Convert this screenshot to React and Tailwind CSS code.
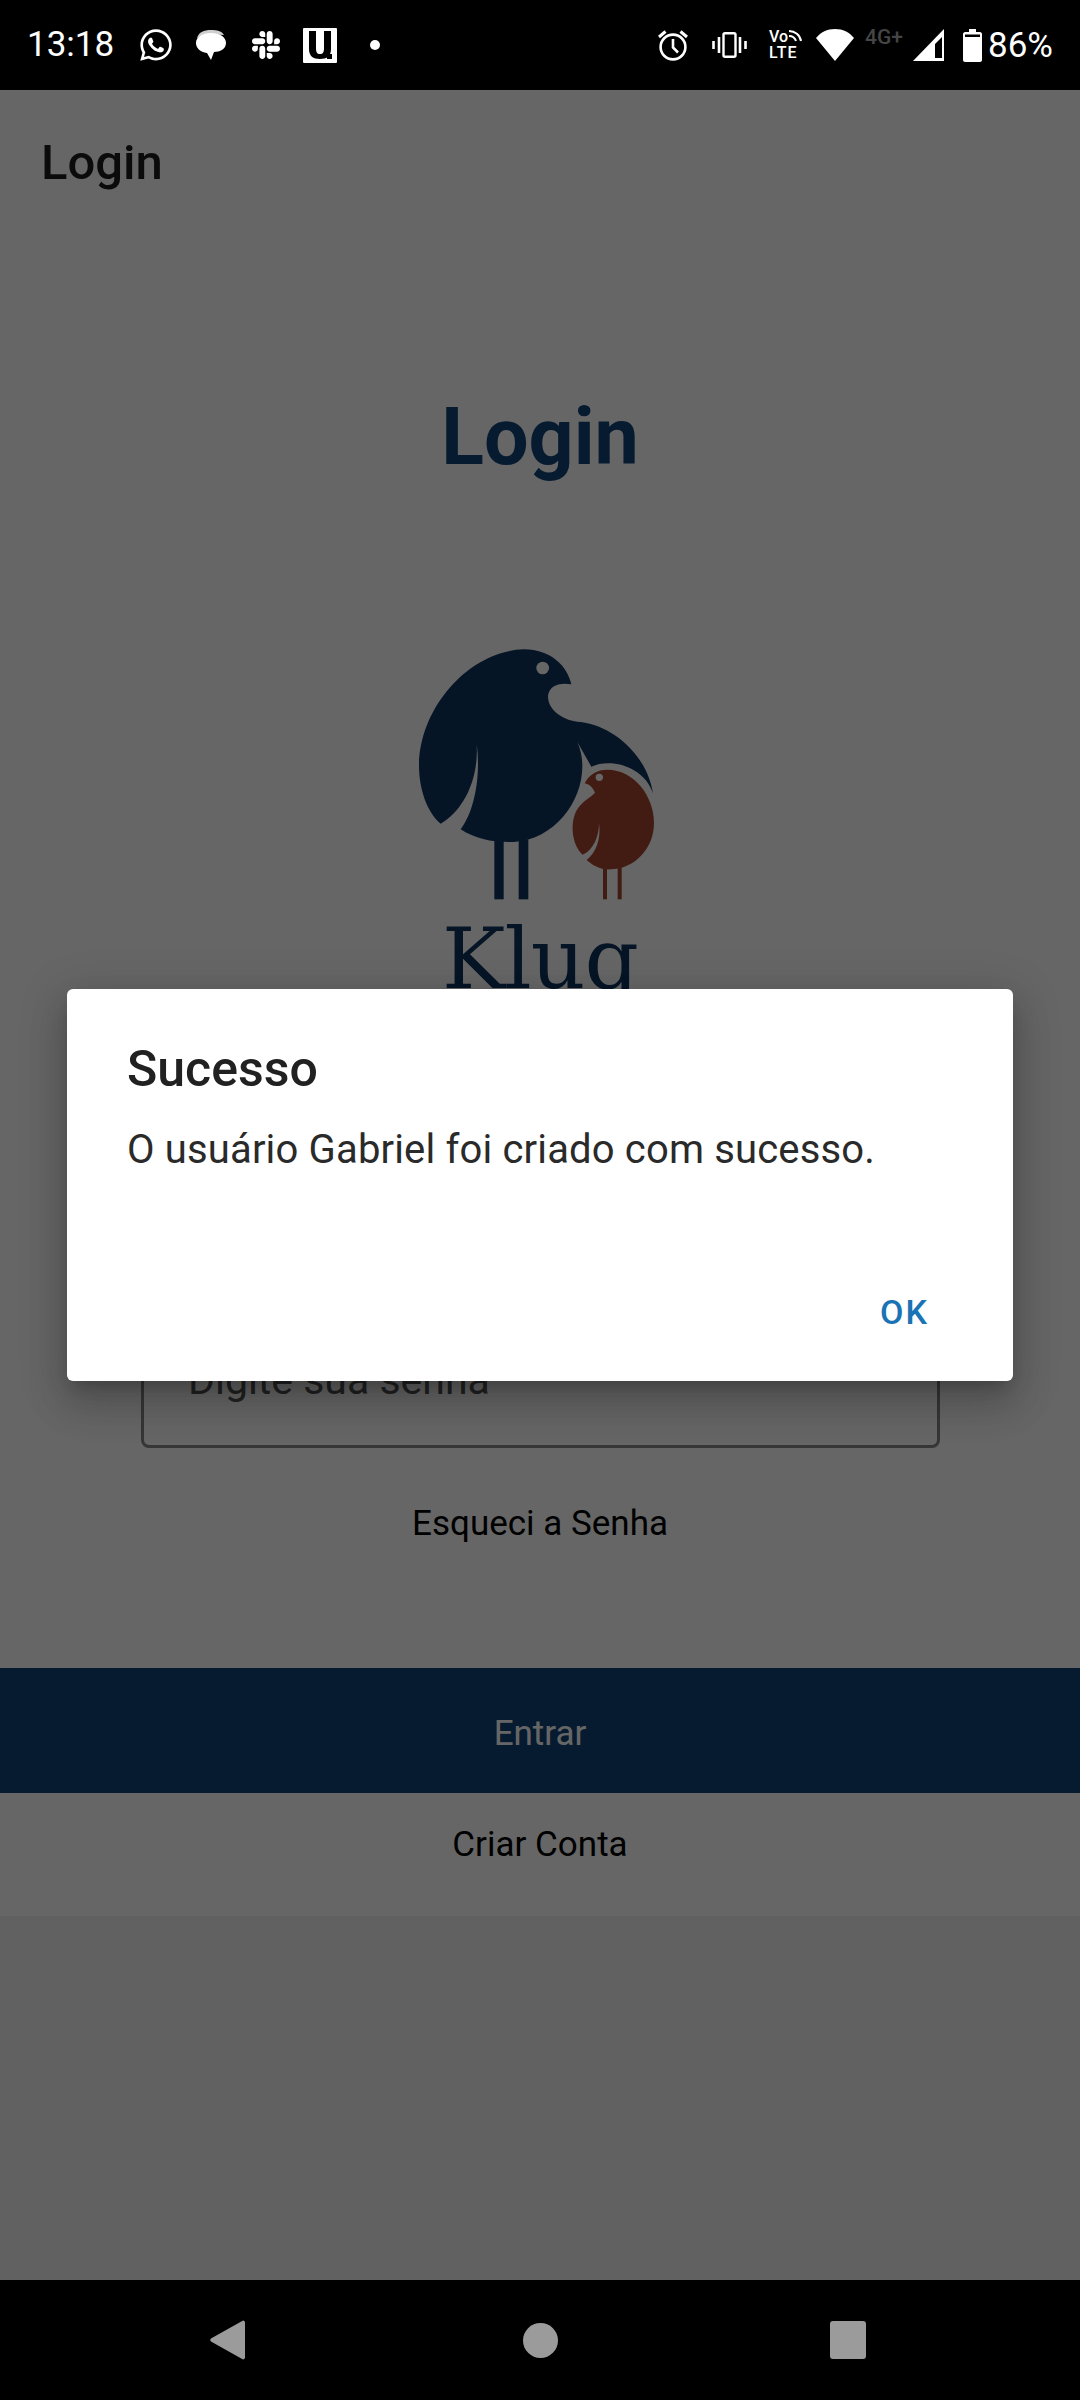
import { FaWhatsapp, FaSlack } from "react-icons/fa";

function BubblesIcon() {
  return (
    <svg width="32" height="34" viewBox="0 0 32 34" className="mt-[2px]">
      <path d="M2 10 C3 3 9 1 16 1 C22 1 27 2 29 6 L14 5 C8 5 4 7 2 10 Z" fill="#cfcfcf" />
      <path d="M16 4 C25 4 31 8 31 14 C31 20 25 23 19 23 L16 31 L12 24 C5 23 1 19 1 14 C1 8 7 4 16 4 Z" fill="#fff" />
    </svg>
  );
}

function ULogo() {
  return (
    <svg width="34" height="35" viewBox="0 0 34 35">
      <rect width="34" height="35" rx="1" fill="#fff" />
      <path d="M6 3 H13 V20 C13 24 14 26 17 26 C20 26 21 24 21 20 V3 H28 V21 C28 28 24 31 17 31 C10 31 6 28 6 21 Z" fill="#000" />
      <rect x="24" y="26" width="5" height="5" fill="#000" />
    </svg>
  );
}

function AlarmIcon() {
  return (
    <svg width="30" height="32" viewBox="0 0 30 32" fill="none" stroke="#fff" strokeWidth="2.6">
      <circle cx="15" cy="18" r="12.4" />
      <path d="M15 10 V18.5 L20 23.5" />
      <path d="M1 8 L7.5 2.5 M29 8 L22.5 2.5" strokeWidth="3" />
    </svg>
  );
}

function VibrateIcon() {
  return (
    <svg width="35" height="26" viewBox="0 0 35 26" fill="none" stroke="#fff">
      <rect x="11.5" y="1.2" width="12" height="23.6" rx="1.5" strokeWidth="2.4" />
      <path d="M7 5 V21 M28 5 V21" strokeWidth="2.6" />
      <path d="M1.5 9 V17 M33.5 9 V17" strokeWidth="2.6" />
    </svg>
  );
}

function VoLte() {
  return (
    <div className="relative w-[33px] h-[32px] font-['Roboto'] font-medium text-white text-[16px] leading-[16px]">
      <div>Vo</div>
      <div className="tracking-[1px]">LTE</div>
      <svg width="14" height="13" viewBox="0 0 14 13" fill="none" stroke="#fff" strokeWidth="2" className="absolute top-0 right-0">
        <path d="M1 2 C7 2 12 6 13 12 M1 7 C4 7 7 9 8 12" />
      </svg>
    </div>
  );
}

function WifiIcon() {
  return (
    <svg width="38" height="32" viewBox="0 0 38 32">
      <path d="M0 9 C5 3 11 0 19 0 C27 0 33 3 38 9 L19 32 Z" fill="#fff" />
    </svg>
  );
}

function SignalIcon() {
  return (
    <svg width="31" height="32" viewBox="0 0 31 32">
      <path fillRule="evenodd" d="M31 0 V32 H0 Z M29 8 L22 15 V29 H29 Z" fill="#fff" />
    </svg>
  );
}

function BatteryIcon() {
  return (
    <svg width="19" height="33" viewBox="0 0 19 33">
      <path fillRule="evenodd" d="M6 0 H13 V3 H17 C18 3 19 4 19 5 V31 C19 32 18 33 17 33 H2 C1 33 0 32 0 31 V5 C0 4 1 3 2 3 H6 Z M2 5.5 V8 H17 V5.5 Z" fill="#fff" />
    </svg>
  );
}

function StatusBar() {
  return (
    <div className="h-[90px] bg-black flex items-center justify-between pl-[27px] pr-[27px] text-white font-['Roboto']">
      <div className="flex items-center">
        <span className="text-[35px] w-[111px]">13:18</span>
        <FaWhatsapp size={36} className="text-white" />
        <div className="ml-[21px]"><BubblesIcon /></div>
        <FaSlack size={32} className="text-white ml-[23px]" />
        <div className="ml-[21px]"><ULogo /></div>
        <div className="ml-[33px] w-[10px] h-[10px] rounded-full bg-white" />
      </div>
      <div className="flex items-center">
        <AlarmIcon />
        <div className="ml-[24px]"><VibrateIcon /></div>
        <div className="ml-[22px]"><VoLte /></div>
        <div className="ml-[14px]"><WifiIcon /></div>
        <span className="ml-[11px] -mt-[14px] text-[#454545] font-medium text-[21px] w-[41px]">4G+</span>
        <div className="ml-[7px]"><SignalIcon /></div>
        <div className="ml-[19px]"><BatteryIcon /></div>
        <span className="ml-[6px] text-[35px] leading-none">86%</span>
      </div>
    </div>
  );
}

function KlugLogo() {
  return (
    <div className="flex flex-col items-center">
      <svg width="247" height="257" viewBox="100 70 741 771" className="-ml-[6px]">
        <path
          d="M572 185 C560 130 510 80 430 80 C260 85 115 260 115 430 C115 500 140 570 180 603 C240 570 295 480 288 365 C300 450 285 560 240 620 C285 650 340 660 400 658 C520 650 605 540 605 430 C605 405 600 380 590 358 L632 432 C690 405 790 430 817 512 C800 400 700 310 600 298 C550 295 502 265 502 220 C505 190 535 178 572 185 Z"
          fill="#0f3560"
        />
        <circle cx="486" cy="136" r="19" fill="#fff" />
        <rect x="341" y="650" width="28" height="180" fill="#0f3560" />
        <rect x="414" y="650" width="29" height="180" fill="#0f3560" />
        <path
          d="M612 482 C625 455 650 441 680 441 C760 441 820 520 820 600 C820 680 760 738 690 740 C660 742 635 728 618 712 C645 690 662 650 655 600 C655 640 640 680 606 696 C575 670 565 600 590 560 C605 535 630 525 643 510 C635 492 625 485 612 482 Z"
          fill="#a5462d"
        />
        <circle cx="656" cy="464" r="11" fill="#fff" />
        <rect x="667" y="730" width="12" height="100" fill="#a5462d" />
        <rect x="711" y="730" width="12" height="100" fill="#a5462d" />
      </svg>
      <div className="mt-[6px] font-['DejaVu_Serif'] text-[85px] leading-[100px] tracking-[-1px] text-[#0f3560]">Klug</div>
    </div>
  );
}

function Field({ placeholder }) {
  return (
    <div className="h-[134px] border-[3px] border-[#888] rounded-[8px] flex items-center pl-[44px] text-[41px] text-[#555]">
      {placeholder}
    </div>
  );
}

export default function App() {
  return (
    <div className="relative w-[1080px] h-[2400px] flex flex-col bg-black font-['Roboto'] overflow-hidden">
      <StatusBar />
      <main className="flex-1 bg-[#f2f2f2] flex flex-col">
        <div className="bg-white h-[1826px] flex flex-col">
          <div className="h-[146px] flex items-center pl-[41px] text-[49px] text-[#1c1c1c] font-medium">Login</div>
          <h1 className="mt-[141px] h-[120px] flex items-center justify-center text-[79px] font-bold text-[#114479]">Login</h1>
          <div className="mt-[149px]"><KlugLogo /></div>
          <div className="mt-[131px] pl-[141px] pr-[140px] flex flex-col gap-[40px]">
            <Field placeholder="Digite seu e-mail" />
            <Field placeholder="Digite sua senha" />
          </div>
          <div className="mt-[55px] text-center text-[35px] leading-[41px] text-black">Esqueci a Senha</div>
          <button className="mt-auto h-[125px] pt-[8px] bg-[#114479] text-white text-[35px]">Entrar</button>
          <div className="h-[123px] pb-[18px] flex items-center justify-center text-[35px] text-black">Criar Conta</div>
        </div>
      </main>
      <div className="h-[120px] bg-black flex items-center pl-[210px]">
        <svg width="35" height="40" viewBox="0 0 36 40"><path d="M34 0 C35 0 36 1 36 2 V38 C36 39 35 40 34 40 L1 21.5 C0 20.5 0 19.5 1 18.5 Z" fill="#9b9b9b" /></svg>
        <div className="ml-[278px] w-[35px] h-[35px] rounded-full bg-[#9b9b9b]" />
        <div className="ml-[272px] w-[36px] h-[38px] rounded-[3px] bg-[#9b9b9b]" />
      </div>

      <div className="absolute top-[90px] left-0 w-full h-[2190px] bg-black/60 flex items-center justify-center">
        <div className="w-[946px] h-[392px] bg-white rounded-[6px] flex flex-col shadow-[0_24px_38px_3px_rgba(0,0,0,0.14),0_9px_46px_8px_rgba(0,0,0,0.12),0_11px_15px_-7px_rgba(0,0,0,0.2)]">
          <h2 className="pl-[60px] pt-[50px] text-[50px] leading-[60px] font-medium text-[#212121]">Sucesso</h2>
          <p className="pl-[60px] mt-[26px] text-[40px] leading-[50px] text-[#2a2a2a] tracking-[0.16px]">O usuário Gabriel foi criado com sucesso.</p>
          <div className="mt-auto pb-[43px] pr-[84px] text-right text-[34px] font-medium tracking-[2px] text-[#1a73b5]">OK</div>
        </div>
      </div>
    </div>
  );
}
